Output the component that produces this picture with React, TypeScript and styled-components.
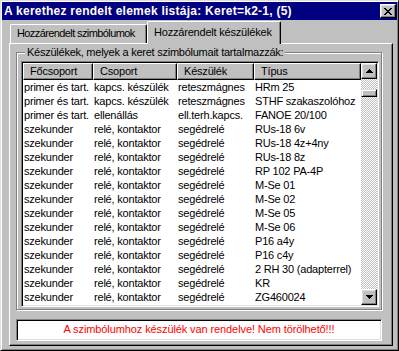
import React from "react";
import styled, { createGlobalStyle } from "styled-components";

const rows: [string, string, string, string][] = [
  ["primer és tart.", "kapcs. készülék", "reteszmágnes", "HRm 25"],
  ["primer és tart.", "kapcs. készülék", "reteszmágnes", "STHF szakaszolóhoz"],
  ["primer és tart.", "ellenállás", "ell.terh.kapcs.", "FANOE 20/100"],
  ["szekunder", "relé, kontaktor", "segédrelé", "RUs-18 6v"],
  ["szekunder", "relé, kontaktor", "segédrelé", "RUs-18 4z+4ny"],
  ["szekunder", "relé, kontaktor", "segédrelé", "RUs-18 8z"],
  ["szekunder", "relé, kontaktor", "segédrelé", "RP 102 PA-4P"],
  ["szekunder", "relé, kontaktor", "segédrelé", "M-Se 01"],
  ["szekunder", "relé, kontaktor", "segédrelé", "M-Se 02"],
  ["szekunder", "relé, kontaktor", "segédrelé", "M-Se 05"],
  ["szekunder", "relé, kontaktor", "segédrelé", "M-Se 06"],
  ["szekunder", "relé, kontaktor", "segédrelé", "P16 a4y"],
  ["szekunder", "relé, kontaktor", "segédrelé", "P16 c4y"],
  ["szekunder", "relé, kontaktor", "segédrelé", "2 RH 30 (adapterrel)"],
  ["szekunder", "relé, kontaktor", "segédrelé", "KR"],
  ["szekunder", "relé, kontaktor", "segédrelé", "ZG460024"],
];

const columns = ["Főcsoport", "Csoport", "Készülék", "Típus"];
const colTemplate = "70px 84px 77px 107px";

const GlobalStyle = createGlobalStyle`
  html, body { margin: 0; padding: 0; background: #c0c0c0; }
  body {
    font-family: "Liberation Sans", Arial, sans-serif;
    font-size: 11px;
    letter-spacing: -0.2px;
    color: #000;
  }
  * { box-sizing: border-box; }
`;

const Window = styled.div`
  width: 399px;
  height: 351px;
  display: flex;
  flex-direction: column;
  background: #c0c0c0;
  border: 1px solid;
  border-color: #dfdfdf #000 #000 #dfdfdf;
  box-shadow: inset 1px 1px #fff, inset -1px -1px #808080;
  padding: 1px;
`;

const TitleBar = styled.div`
  height: 18px;
  flex-shrink: 0;
  display: flex;
  align-items: center;
  justify-content: space-between;
  padding: 0 1px 0 2px;
  background: #000080;
  color: #fff;
  font-weight: bold;
  font-size: 12px;
  letter-spacing: 0.25px;
`;

const RaisedButton = styled.div<{ $w: number; $h: number }>`
  width: ${(p) => p.$w}px;
  height: ${(p) => p.$h}px;
  flex-shrink: 0;
  display: flex;
  align-items: center;
  justify-content: center;
  background: #c0c0c0;
  border: 1px solid;
  border-color: #fff #000 #000 #fff;
  box-shadow: inset -1px -1px #808080, inset 1px 1px #dfdfdf;
`;

const Body = styled.div`
  flex: 1;
  display: flex;
  flex-direction: column;
  padding: 1px 4px 3px 7px;
`;

const TabStrip = styled.div`
  height: 22px;
  flex-shrink: 0;
  display: flex;
  align-items: flex-end;
  padding-left: 1px;
  position: relative;
  z-index: 1;
`;

const Tab = styled.div<{ $active?: boolean; $w: number; $spacing: number }>`
  width: ${(p) => p.$w}px;
  height: ${(p) => (p.$active ? 23 : 19)}px;
  margin-bottom: ${(p) => (p.$active ? -1 : 0)}px;
  padding: ${(p) => (p.$active ? "3px 0 0 6px" : "1px 0 0 6px")};
  letter-spacing: ${(p) => p.$spacing}px;
  line-height: 14px;
  white-space: nowrap;
  overflow: hidden;
  background: #c0c0c0;
  border-top: 1px solid #fff;
  border-left: 1px solid #fff;
  border-right: 1px solid #000;
  border-top-left-radius: 2px;
  border-top-right-radius: 2px;
  box-shadow: inset -1px 0 #808080;
`;

const Panel = styled.div`
  flex: 1;
  display: flex;
  flex-direction: column;
  border: 1px solid;
  border-color: #fff #000 #000 #fff;
  box-shadow: inset -1px -1px #808080;
  padding: 2px 10px 4px 6px;
`;

const Group = styled.fieldset`
  margin: 0;
  min-width: 0;
  padding: 2px 2px 2px 4px;
  border: 1px solid #808080;
  box-shadow: inset 1px 1px #fff, 1px 1px #fff;
`;

const GroupLabel = styled.legend`
  margin-left: 4px;
  padding: 0 2px;
  line-height: 13px;
  background: #c0c0c0;
  white-space: nowrap;
  letter-spacing: -0.25px;
`;

const ListBox = styled.div`
  height: 246px;
  display: flex;
  background: #fff;
  border: 1px solid;
  border-color: #808080 #fff #fff #808080;
  box-shadow: inset 1px 1px #000, inset -1px -1px #dfdfdf;
  padding: 1px;
`;

const Table = styled.div`
  flex: 1;
  overflow: hidden;
`;

const HeaderRow = styled.div`
  display: grid;
  grid-template-columns: ${colTemplate};
  height: 17px;
`;

const HeaderCell = styled.div`
  background: #c0c0c0;
  border: 1px solid;
  border-color: #fff #000 #000 #fff;
  box-shadow: inset -1px -1px #808080;
  padding-left: 6px;
  line-height: 14px;
  white-space: nowrap;
  overflow: hidden;
`;

const Row = styled.div`
  display: grid;
  grid-template-columns: ${colTemplate};
  height: 14px;
  line-height: 14px;
`;

const Cell = styled.div`
  padding-left: 1px;
  white-space: nowrap;
  overflow: hidden;
`;

const ScrollBar = styled.div`
  width: 16px;
  display: flex;
  flex-direction: column;
`;

const Track = styled.div`
  flex: 1;
  background-color: #fff;
  background-image: conic-gradient(#c0c0c0 25%, #fff 0 50%, #c0c0c0 0 75%, #fff 0);
  background-size: 2px 2px;
`;

const Thumb = styled.div<{ $offset: number }>`
  margin-top: ${(p) => p.$offset}px;
  height: 8px;
  background: #c0c0c0;
  border: 1px solid;
  border-color: #dfdfdf #000 #000 #dfdfdf;
  box-shadow: inset 1px 1px #fff, inset -1px -1px #808080;
`;

const Message = styled.div`
  margin-top: 9px;
  height: 22px;
  background: #fff;
  border: 1px solid;
  border-color: #808080 #fff #fff #808080;
  box-shadow: inset 1px 1px #000, inset -1px -1px #dfdfdf;
  color: #f00;
  text-align: center;
  line-height: 19px;
  letter-spacing: -0.1px;
`;

const CloseGlyph = () => (
  <svg width="8" height="7" viewBox="0 0 8 7" shapeRendering="crispEdges">
    <path
      d="M0 0h2v1h-2zM6 0h2v1h-2zM1 1h2v1h-2zM5 1h2v1h-2zM2 2h4v1h-4zM3 3h2v1h-2zM2 4h4v1h-4zM1 5h2v1h-2zM5 5h2v1h-2zM0 6h2v1h-2zM6 6h2v1h-2z"
      fill="#000"
    />
  </svg>
);

const Arrow = ({ down }: { down?: boolean }) => (
  <svg width="7" height="4" viewBox="0 0 7 4" shapeRendering="crispEdges">
    <path
      d={down ? "M0 0h7v1h-7zM1 1h5v1h-5zM2 2h3v1h-3zM3 3h1v1h-1z" : "M3 0h1v1h-1zM2 1h3v1h-3zM1 2h5v1h-5zM0 3h7v1h-7z"}
      fill="#000"
    />
  </svg>
);

export default function App() {
  return (
    <>
      <GlobalStyle />
      <Window>
        <TitleBar>
          <span>A kerethez rendelt elemek listája: Keret=k2-1, (5)</span>
          <RaisedButton $w={16} $h={14}>
            <CloseGlyph />
          </RaisedButton>
        </TitleBar>
        <Body>
          <TabStrip>
            <Tab $w={137} $spacing={-0.6}>Hozzárendelt szimbólumok</Tab>
            <Tab $active $w={134} $spacing={-0.2}>Hozzárendelt készülékek</Tab>
          </TabStrip>
          <Panel>
            <Group>
              <GroupLabel>Készülékek, melyek a keret szimbólumait tartalmazzák:</GroupLabel>
              <ListBox>
                <Table>
                  <HeaderRow>
                    {columns.map((c) => (
                      <HeaderCell key={c}>{c}</HeaderCell>
                    ))}
                  </HeaderRow>
                  {rows.map((r, i) => (
                    <Row key={i}>
                      {r.map((v, j) => (
                        <Cell key={j}>{v}</Cell>
                      ))}
                    </Row>
                  ))}
                </Table>
                <ScrollBar>
                  <RaisedButton $w={16} $h={16}>
                    <Arrow />
                  </RaisedButton>
                  <Track>
                    <Thumb $offset={10} />
                  </Track>
                  <RaisedButton $w={16} $h={16}>
                    <Arrow down />
                  </RaisedButton>
                </ScrollBar>
              </ListBox>
            </Group>
            <Message>A szimbólumhoz készülék van rendelve! Nem törölhető!!!</Message>
          </Panel>
        </Body>
      </Window>
    </>
  );
}
